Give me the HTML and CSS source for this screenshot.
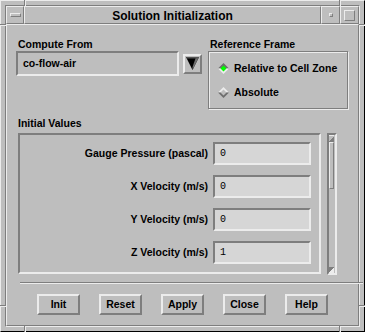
FILE: index.html
```html
<!DOCTYPE html>
<html>
<head>
<meta charset="utf-8">
<title>Solution Initialization</title>
<link rel="stylesheet" href="styles.css">
</head>
<body>
<div class="window">
  <div class="inner">
    <div class="titlebar">
      <div class="tb-seg tb-menu"><span class="menu-bar"></span></div>
      <div class="tb-seg tb-title">Solution Initialization</div>
      <div class="tb-seg tb-min"><span class="min-box"></span></div>
      <div class="tb-seg tb-max"><span class="max-box"></span></div>
    </div>
    <div class="content">
      <div class="top">
        <div class="col">
          <div class="label">Compute From</div>
          <div class="combo-row">
            <div class="combo">co-flow-air</div>
            <div class="combo-btn">
              <svg width="13" height="13" viewBox="0 0 13 13">
                <polygon points="0,0 13,0 6.5,13" fill="#000"/>
                <polygon points="10,0 13,0 6.5,13 6.5,10" fill="#6e6e6e"/>
                <polygon points="0,0 13,0 12,1.5 1,1.5" fill="#555"/>
              </svg>
            </div>
          </div>
        </div>
        <div class="col">
          <div class="label">Reference Frame</div>
          <div class="radio-box">
            <div class="radio">
              <svg class="diamond" width="11" height="11" viewBox="0 0 11 11">
                <polygon points="5.5,0 11,5.5 0,5.5" fill="#6e6e6e"/>
                <polygon points="0,5.5 11,5.5 5.5,11" fill="#ececec"/>
                <polygon points="5.5,2.5 8.5,5.5 5.5,8.5 2.5,5.5" fill="#00ff00"/>
              </svg>
              <span>Relative to Cell Zone</span>
            </div>
            <div class="radio">
              <svg class="diamond" width="11" height="11" viewBox="0 0 11 11">
                <polygon points="5.5,0 11,5.5 0,5.5" fill="#ececec"/>
                <polygon points="0,5.5 11,5.5 5.5,11" fill="#6e6e6e"/>
                <polygon points="5.5,2.5 8.5,5.5 5.5,8.5 2.5,5.5" fill="#bebebe"/>
              </svg>
              <span>Absolute</span>
            </div>
          </div>
        </div>
      </div>

      <div class="label section-label">Initial Values</div>
      <div class="values-row">
        <div class="values-box">
          <div class="vlabel">Gauge Pressure (pascal)</div><div class="field">0</div>
          <div class="vlabel">X Velocity (m/s)</div><div class="field">0</div>
          <div class="vlabel">Y Velocity (m/s)</div><div class="field">0</div>
          <div class="vlabel">Z Velocity (m/s)</div><div class="field">1</div>
        </div>
        <div class="scrollbar">
          <div class="sb-arrow sb-up"></div>
          <div class="sb-thumb"></div>
          <div class="sb-fill"></div>
          <div class="sb-arrow sb-down"></div>
        </div>
      </div>

      <div class="separator"></div>

      <div class="buttons">
        <div class="btn">Init</div>
        <div class="btn">Reset</div>
        <div class="btn">Apply</div>
        <div class="btn">Close</div>
        <div class="btn">Help</div>
      </div>
    </div>
  </div>
  <span class="mark mark-tl-v"></span>
  <span class="mark mark-tr-v"></span>
  <span class="mark mark-bl-v"></span>
  <span class="mark mark-br-v"></span>
  <span class="mark mark-lt-h"></span>
  <span class="mark mark-lb-h"></span>
  <span class="mark mark-rt-h"></span>
  <span class="mark mark-rb-h"></span>
</div>
</body>
</html>
```
FILE: styles.css
```css
html, body {
  margin: 0;
  padding: 0;
  background: #bebebe;
}
body {
  font-family: "Liberation Sans", Arial, sans-serif;
  font-weight: bold;
  font-size: 10.5px;
  color: #000;
}
.window {
  position: relative;
  box-sizing: border-box;
  width: 365px;
  height: 332px;
  background: #bebebe;
  border: 1px solid;
  border-color: #ececec #000 #000 #ececec;
  padding: 4px;
}
.inner {
  box-sizing: border-box;
  height: 100%;
  border: 1px solid;
  border-color: #7e7e7e #ececec #ececec #7e7e7e;
  display: flex;
  flex-direction: column;
}
.titlebar {
  display: flex;
  height: 18px;
  flex: none;
}
.tb-seg {
  box-sizing: border-box;
  border: 1px solid;
  border-color: #ececec #7e7e7e #7e7e7e #ececec;
  display: flex;
  align-items: center;
  justify-content: center;
}
.tb-menu { width: 18px; }
.tb-title {
  flex: 1;
  font-size: 12px;
  line-height: 14px;
  padding-top: 1px;
}
.tb-min { width: 19px; }
.tb-max { width: 19px; }
.menu-bar {
  box-sizing: border-box;
  width: 11px;
  height: 4px;
  border: 1px solid;
  border-color: #ececec #7e7e7e #7e7e7e #ececec;
}
.min-box {
  box-sizing: border-box;
  width: 4px;
  height: 4px;
  border: 1px solid;
  border-color: #ececec #7e7e7e #7e7e7e #ececec;
}
.max-box {
  box-sizing: border-box;
  width: 11px;
  height: 11px;
  border: 1px solid;
  border-color: #ececec #7e7e7e #7e7e7e #ececec;
}
.content {
  flex: 1;
  box-sizing: border-box;
  border: 1px solid;
  border-color: #ececec #7e7e7e #7e7e7e #ececec;
  padding: 13px 9px 0 9px;
  display: flex;
  flex-direction: column;
}
.label {
  height: 12px;
  line-height: 12px;
  margin-left: 2px;
  white-space: nowrap;
}
.top {
  display: grid;
  grid-template-columns: 186px 140px;
  column-gap: 6px;
}
.combo-row {
  margin-top: 1px;
  display: flex;
  align-items: center;
  gap: 4px;
}
.combo {
  box-sizing: border-box;
  width: 163px;
  height: 25px;
  border: 2px solid;
  border-color: #7e7e7e #ececec #ececec #7e7e7e;
  padding-left: 5px;
  line-height: 21px;
}
.combo-btn {
  box-sizing: border-box;
  width: 19px;
  height: 20px;
  border: 2px solid;
  border-color: #ececec #7e7e7e #7e7e7e #ececec;
  display: flex;
  align-items: center;
  justify-content: center;
}
.combo-btn svg { display: block; }
.radio-box {
  box-sizing: border-box;
  margin-top: 1px;
  height: 58px;
  border: 1px solid #7e7e7e;
  box-shadow: inset 1px 1px 0 #ececec, 1px 1px 0 #ececec;
  padding: 8px 0 0 9px;
  display: flex;
  flex-direction: column;
  gap: 8px;
}
.radio {
  display: flex;
  align-items: center;
  height: 16px;
  gap: 5px;
  white-space: nowrap;
}
.diamond { display: block; flex: none; }
.section-label {
  margin-top: 8px;
}
.values-row {
  margin-top: 4px;
  margin-left: 2px;
  display: flex;
  align-items: flex-start;
  gap: 6px;
}
.values-box {
  box-sizing: border-box;
  width: 303px;
  height: 141px;
  border: 2px solid;
  border-color: #7e7e7e #ececec #ececec #7e7e7e;
  padding: 7px 8px 8px 0;
  display: grid;
  grid-template-columns: 1fr 98px;
  grid-auto-rows: 23px;
  column-gap: 5px;
  row-gap: 10px;
}
.vlabel {
  text-align: right;
  line-height: 23px;
  white-space: nowrap;
}
.field {
  box-sizing: border-box;
  height: 23px;
  border: 2px solid;
  border-color: #7e7e7e #ececec #ececec #7e7e7e;
  background: #d6d6d6;
  font-family: "Liberation Mono", "DejaVu Sans Mono", monospace;
  font-weight: normal;
  font-size: 10px;
  line-height: 19px;
  padding-left: 5px;
}
.scrollbar {
  box-sizing: border-box;
  width: 10px;
  height: 142px;
  border: 2px solid;
  border-color: #7e7e7e #ececec #ececec #7e7e7e;
  display: flex;
  flex-direction: column;
  padding: 0 1px 0 0;
}
.sb-arrow {
  height: 6px;
  flex: none;
  position: relative;
}
.sb-up {
  background: linear-gradient(to bottom right, transparent 50%, #7e7e7e 50%);
  border-top: 1px solid #ececec;
}
.sb-down {
  background: linear-gradient(to top left, #ececec 50%, #7e7e7e 50%);
}
.sb-thumb {
  box-sizing: border-box;
  height: 47px;
  flex: none;
  border: 1px solid;
  border-color: #ececec #7e7e7e #7e7e7e #ececec;
}
.sb-fill { flex: 1; }
.separator {
  margin-top: 7px;
  margin-left: 4px;
  width: 343px;
  height: 1px;
  background: #7e7e7e;
  border-bottom: 1px solid #ececec;
}
.buttons {
  margin-top: 10px;
  display: flex;
  justify-content: center;
  gap: 19px;
}
.btn {
  box-sizing: border-box;
  width: 43px;
  height: 21px;
  border: 2px solid;
  border-color: #ececec #7e7e7e #7e7e7e #ececec;
  text-align: center;
  line-height: 17px;
}
.mark {
  position: absolute;
  background: #7e7e7e;
}
.mark-tl-v { left: 23px; top: -1px; width: 1px; height: 6px; box-shadow: 1px 0 0 #ececec; }
.mark-tr-v { left: 338px; top: -1px; width: 1px; height: 6px; box-shadow: 1px 0 0 #ececec; }
.mark-bl-v { left: 23px; bottom: -1px; width: 1px; height: 6px; box-shadow: 1px 0 0 #ececec; }
.mark-br-v { left: 338px; bottom: -1px; width: 1px; height: 6px; box-shadow: 1px 0 0 #ececec; }
.mark-lt-h { left: -1px; top: 23px; width: 6px; height: 1px; box-shadow: 0 1px 0 #ececec; }
.mark-lb-h { left: -1px; top: 304px; width: 6px; height: 1px; box-shadow: 0 1px 0 #ececec; }
.mark-rt-h { right: -1px; top: 23px; width: 6px; height: 1px; box-shadow: 0 1px 0 #ececec; }
.mark-rb-h { right: -1px; top: 304px; width: 6px; height: 1px; box-shadow: 0 1px 0 #ececec; }
```
